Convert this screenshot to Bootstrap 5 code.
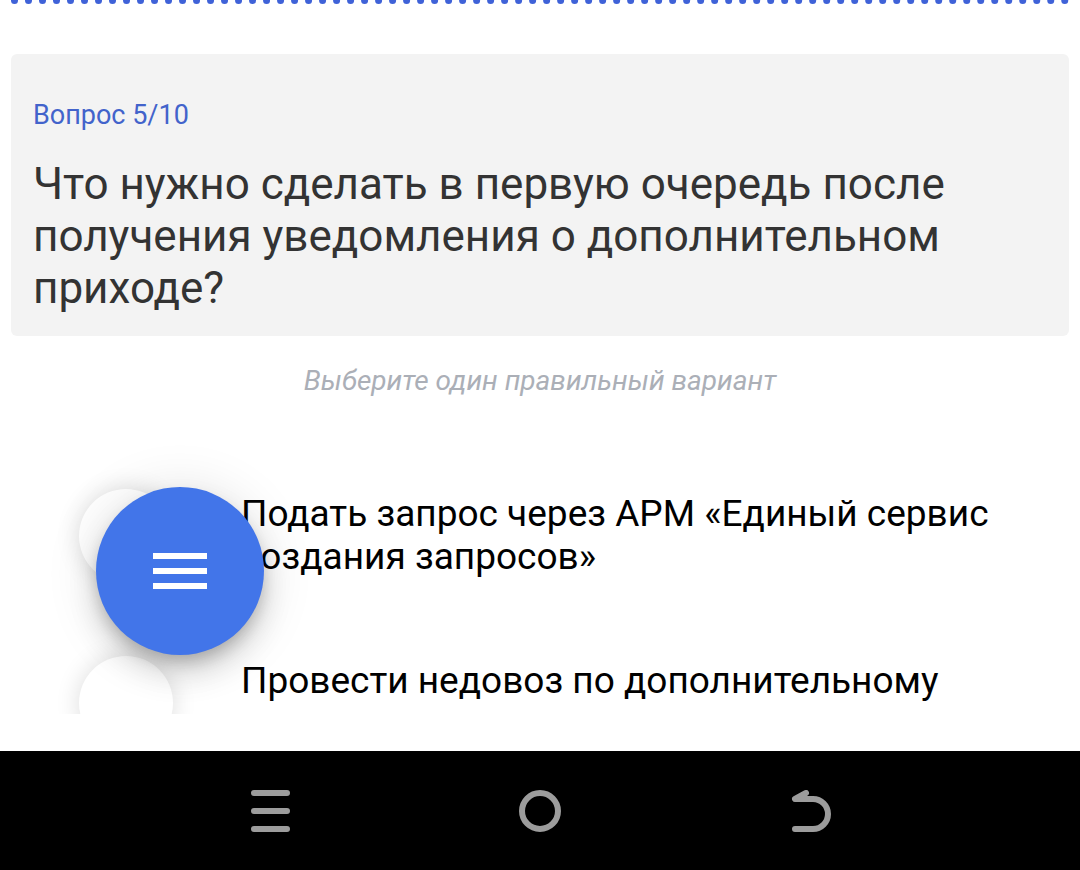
<!DOCTYPE html>
<html lang="ru">
<head>
<meta charset="utf-8">
<meta name="viewport" content="width=device-width, initial-scale=1">
<title>Вопрос 5/10</title>
<link href="https://cdn.jsdelivr.net/npm/bootstrap@5.3.0/dist/css/bootstrap.min.css" rel="stylesheet">
<style>
  body { font-family: Roboto, "Noto Sans", sans-serif; color: #000; background: #fff; }
  .quiz-view { padding: 0 11px; margin-bottom: 37px; min-height: 0; }
  .progress-dots { height: 4px; }
  .progress-dots span { border-top: 7px dotted #3f62d8; }
  .question-box { margin-top: 50px; padding: 42px 22px 22px; background: #f3f3f3; border-radius: 6px; }
  .question-count { font-size: 27px; line-height: 38px; color: #4263cb; }
  .question-title { margin-top: 24px; font-size: 44px; line-height: 52px; font-weight: 400; color: #333; }
  .hint { margin: 24px 0 87px; font-size: 28px; line-height: 42px; color: #abafb7; }
  .answer { padding-left: 68px; margin-bottom: 73px; column-gap: 68px; }
  .answer .form-check-input { width: 94px; height: 94px; border: 0; background-color: #fff; box-shadow: 0 0 24px rgba(0, 0, 0, .14); }
  .answer label { padding-top: 3px; font-size: 37px; line-height: 43px; }
  .menu-fab { left: 96px; bottom: 215px; width: 168px; height: 168px; background: #4275e9;
    box-shadow: 0 9px 15px -3px rgba(0, 0, 0, .2), 0 18px 30px rgba(0, 0, 0, .14), 0 3px 54px rgba(0, 0, 0, .12); }
  .system-bar { height: 119px; background: #000; padding: 0 135px; }
  .system-bar svg { stroke: #9c9c9c; stroke-width: 6; fill: none; stroke-linecap: round; stroke-linejoin: round; }
</style>
</head>
<body>
<div class="vh-100 d-flex flex-column overflow-hidden position-relative">
  <main class="quiz-view flex-grow-1 overflow-hidden">
    <div class="progress-dots overflow-hidden d-flex align-items-end"><span class="flex-grow-1"></span></div>
    <section class="question-box">
      <div class="question-count">Вопрос 5/10</div>
      <h1 class="question-title mb-0">Что нужно сделать в первую очередь после получения уведомления о дополнительном приходе?</h1>
    </section>
    <p class="hint text-center fst-italic">Выберите один правильный вариант</p>
    <form>
      <div class="answer d-flex align-items-start">
        <input class="form-check-input m-0 flex-shrink-0" type="radio" name="answer" id="answer1">
        <label for="answer1">Подать запрос через АРМ «Единый сервис создания запросов»</label>
      </div>
      <div class="answer d-flex align-items-start">
        <input class="form-check-input m-0 flex-shrink-0" type="radio" name="answer" id="answer2">
        <label for="answer2">Провести недовоз по дополнительному</label>
      </div>
    </form>
  </main>
  <button type="button" class="menu-fab btn border-0 p-0 rounded-circle position-absolute d-flex align-items-center justify-content-center" aria-label="Меню">
    <svg width="54" height="36" viewBox="0 0 54 36" fill="#fff"><path d="M0 0h54v6H0zM0 15h54v6H0zM0 30h54v6H0z"/></svg>
  </button>
  <nav class="system-bar d-flex align-items-center flex-shrink-0" aria-label="Система">
    <button type="button" class="btn border-0 p-0 flex-fill" aria-label="Недавние">
      <svg width="42" height="42" viewBox="0 0 42 42"><path d="M5 3h33M5 21h33M5 39h33"/></svg>
    </button>
    <button type="button" class="btn border-0 p-0 flex-fill" aria-label="Домой">
      <svg width="42" height="42" viewBox="0 0 42 42"><circle cx="21" cy="21" r="18"/></svg>
    </button>
    <button type="button" class="btn border-0 p-0 flex-fill" aria-label="Назад">
      <svg width="42" height="42" viewBox="0 0 42 42"><path d="M17 3L6 9H24a15 15 0 0 1 0 30H6"/></svg>
    </button>
  </nav>
</div>
<script src="https://cdn.jsdelivr.net/npm/bootstrap@5.3.0/dist/js/bootstrap.bundle.min.js"></script>
</body>
</html>
